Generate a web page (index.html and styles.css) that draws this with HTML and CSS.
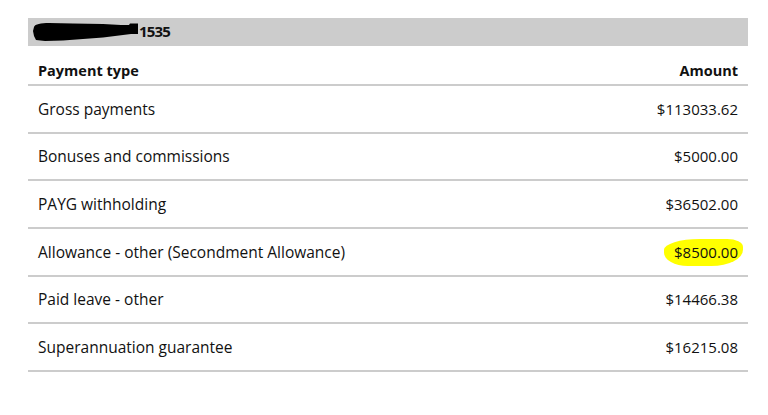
FILE: index.html
```html
<!DOCTYPE html>
<html>
<head>
<meta charset="utf-8">
<link rel="stylesheet" href="styles.css">
</head>
<body>
<div class="page">
  <div class="acct">
    <svg class="redact" width="106" height="20" viewBox="0 0 106 20"><path d="M1 5 C2 2 8 1 16 1 L40 1.5 L70 2 L88 3 L96 3 L97 1.5 L105 1.5 L105 12 L98 12 L90 13 L70 15.5 L50 17 L30 18.5 L12 19 L3 18 L1 14 L0 9 Z" fill="#000"/></svg>
    <span class="acct-num">1535</span>
  </div>
  <div class="table">
    <div class="row head"><span>Payment type</span><span>Amount</span></div>
    <div class="row"><span>Gross payments</span><span class="amt">$113033.62</span></div>
    <div class="row"><span>Bonuses and commissions</span><span class="amt">$5000.00</span></div>
    <div class="row"><span>PAYG withholding</span><span class="amt">$36502.00</span></div>
    <div class="row"><span>Allowance - other (Secondment Allowance)</span><span class="amt hl">$8500.00</span></div>
    <div class="row"><span>Paid leave - other</span><span class="amt">$14466.38</span></div>
    <div class="row"><span>Superannuation guarantee</span><span class="amt">$16215.08</span></div>
  </div>
</div>
</body>
</html>
```
FILE: styles.css
```css
html, body { margin: 0; padding: 0; background: #fff; }
body { font-family: "Open Sans", "Liberation Sans", sans-serif; color: #111; }
.page { padding: 18px 0 0 28px; width: 720px; }
.acct {
  height: 28px; background: #cccccc; display: flex; align-items: center;
  padding-left: 5px; font-weight: 700; font-size: 15px; letter-spacing: -0.8px;
}
.redact { display: block; margin-right: 0; }
.acct-num { position: relative; top: -1px; }
.row {
  display: flex; justify-content: space-between; align-items: center;
  box-sizing: border-box; height: 47.67px; border-bottom: 2px solid #cccccc;
  padding: 0 10px; font-size: 15.5px;
}
.row.head { height: 40px; font-weight: 700; padding-top: 10px; font-size: 14.5px; }
.amt { font-size: 15px; }
.hl { position: relative; z-index: 0; }
.hl::before {
  content: ""; position: absolute; left: -10px; right: -5px; top: -3px; bottom: -4px;
  background: #ffff00; border-radius: 45% 20% 40% 30% / 40% 30% 60% 50%; z-index: -1;
}
```
